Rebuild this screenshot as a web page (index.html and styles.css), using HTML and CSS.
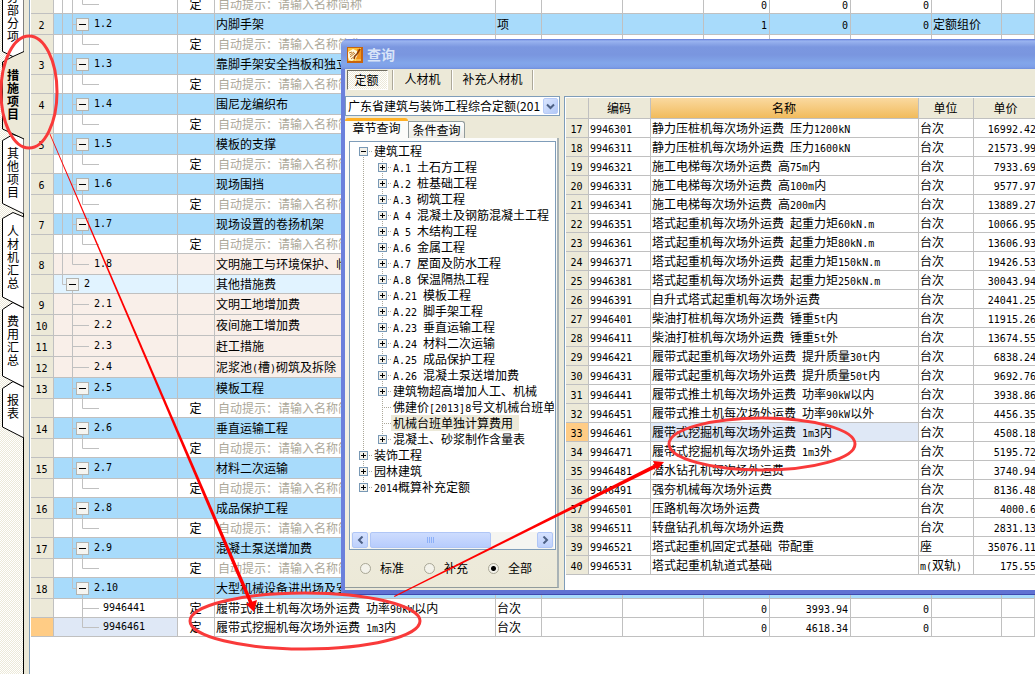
FILE: index.html
```html
<!DOCTYPE html>
<html lang="zh-CN">
<head>
<meta charset="utf-8">
<title>措施项目 - 查询</title>
<link rel="stylesheet" href="styles.css">
</head>
<body>
<div class="app">
  <nav class="side">
    <svg class="side-shapes" width="24" height="440" aria-hidden="true">
      <g fill="#fff" stroke="#000">
        <path d="M2.5 -5V51.500L24 62V-5Z"/>
        <path d="M2.500 388.500V427L24 438V387L13 381.500Z"/>
        <path d="M2.500 309.500V376L24 387V308L13 302.500Z"/>
        <path d="M2.500 218.500V297L24 308V217L13 212.500Z"/>
        <path d="M2.500 140.500V203.500L24 214V138L13 134.500Z"/>
      </g>
      <path d="M24 51.500L13 56.500L2.500 62V129L24 139Z" fill="#ece9d8"/>
      <path d="M24 51.500L13 56.500L2.500 62V129L24 139" fill="none" stroke="#000"/>
    </svg>
    <button class="side-tab t1"><span>分部分项</span></button>
    <button class="side-tab t2 active"><span>措施项目</span></button>
    <button class="side-tab t3"><span>其他项目</span></button>
    <button class="side-tab t4"><span>人材机汇总</span></button>
    <button class="side-tab t5"><span>费用汇总</span></button>
    <button class="side-tab t6"><span>报表</span></button>
  </nav>
  <div class="gutter"></div>
  <main class="sheet">
    <table class="grid main-grid">
      <colgroup><col class="m0"><col class="m1"><col class="m2"><col class="m3"><col class="m4"><col class="m5"><col class="m5"><col class="m6"><col class="m5"><col class="m5"><col class="m7"><col></colgroup>
      <tbody id="items"></tbody>
    </table>
  </main>
</div>

<section class="dialog" aria-label="查询">
  <header class="title">
    <svg width="16" height="16" viewBox="0 0 16 16" aria-hidden="true">
      <rect width="16" height="16" fill="#c8640c"/>
      <rect x="1" y="1" width="13" height="13" fill="#ffc23a"/>
      <path d="M10 2h4v12h-5z" fill="#f0921c"/>
      <path d="M1 5l5-3 4 2 1 3-2 4-4 3-3-1-1-3z" fill="#fff8dc"/>
      <path d="M2 6l3-1M3 8l4-3M3 10l5-4M4 12l5-4" stroke="#c07a2c" fill="none"/>
      <path d="M13 2l-3 5-2 2-1 3" stroke="#8a3a04" stroke-width="1.500" fill="none"/>
      <path d="M8 13h6" stroke="#ffe480"/>
    </svg>
    <h1>查询</h1>
  </header>
  <div class="toolbar">
    <button class="tool pressed">定额</button><i></i>
    <button class="tool">人材机</button><i></i>
    <button class="tool wide">补充人材机</button><i></i>
  </div>
  <div class="body">
    <div class="left">
      <div class="combo">
        <select aria-label="定额库"><option>广东省建筑与装饰工程综合定额(201</option></select>
        <span class="drop"><svg width="9" height="7"><path d="M1 1.500L4.500 5L8 1.500" fill="none" stroke="#4d6185" stroke-width="2"/></svg></span>
      </div>
      <div class="tabs">
        <button class="tab on">章节查询</button>
        <button class="tab">条件查询</button>
      </div>
      <div class="page">
        <div class="treebox">
          <div class="tree" id="tree"></div>
          <div class="scroll">
            <button class="sb" aria-label="向左"><svg width="7" height="8"><path d="M5.500 0.500L2 4L5.500 7.500" fill="none" stroke="#4d6185" stroke-width="2"/></svg></button>
            <div class="thumb"><svg width="9" height="6"><path d="M1.500 0v6M3.500 0v6M5.500 0v6M7.500 0v6" stroke="#8cb0f8"/></svg></div>
            <button class="sb" aria-label="向右"><svg width="7" height="8"><path d="M1.500 0.500L5 4L1.500 7.500" fill="none" stroke="#4d6185" stroke-width="2"/></svg></button>
          </div>
        </div>
        <div class="radios">
          <label><input type="radio" name="kind">标准</label>
          <label><input type="radio" name="kind">补充</label>
          <label><input type="radio" name="kind" checked>全部</label>
        </div>
      </div>
    </div>
    <div class="right">
      <table class="grid query-grid">
        <colgroup><col class="q0"><col class="q1"><col><col class="q3"><col class="q4"></colgroup>
        <thead><tr><th></th><th>编码</th><th class="sorted">名称</th><th>单位</th><th>单价</th></tr></thead>
        <tbody id="quota"></tbody>
      </table>
    </div>
  </div>
</section>

<svg class="marks" aria-hidden="true">
  <g fill="none" stroke="#f93a3a" stroke-width="3">
    <ellipse cx="29" cy="92" rx="28" ry="56"/>
    <ellipse cx="305" cy="621" rx="115" ry="28"/>
    <ellipse cx="762" cy="444" rx="93" ry="26"/>
  </g>
  <g fill="#f00">
    <path d="M49.500 134L50.200 133.700L252.500 602L249.500 604Z"/>
    <path d="M246 604L257 600L254 612Z"/>
    <path d="M394 596L394.500 597L657 467.500L655.500 464Z"/>
    <path d="M653 461L664 462L657 470Z"/>
  </g>
</svg>
<script src="app.js"></script>
</body>
</html>
```

FILE: styles.css
```css
* { box-sizing: border-box; }
html, body { height: 100%; }
body {
  margin: 0;
  overflow: hidden;
  background: #fff;
  color: #000;
  font: 12px/16px "Noto Sans CJK SC", sans-serif;
}
button, select, input { font: inherit; color: inherit; margin: 0; padding: 0; border: 0; background: none; }
svg { display: block; }
.l { font-family: "DejaVu Sans Mono", monospace; font-size: 10px; line-height: 10px; }

.app { display: flex; height: 100%; }

.side {
  position: relative;
  flex: none;
  width: 24px;
  border-right: 1px solid #000;
  background: repeating-conic-gradient(#ece9d8 0 25%, #fff 0 50%) 0 0 / 2px 2px;
  display: flex;
  flex-direction: column;
}
.side-shapes { position: absolute; left: 0; top: 0; }
.side-tab {
  position: relative;
  width: 24px;
  display: flex;
  align-items: center;
  padding-left: 7px;
}
.side-tab span { width: 12px; line-height: 13px; word-break: break-all; }
.side-tab.active { font-weight: bold; }
.t1 { height: 56px; align-items: flex-end; padding-bottom: 14px; overflow: hidden; }
.t2 { height: 78px; padding-bottom: 3px; }
.t3 { height: 78px; padding-bottom: 3px; }
.t4 { height: 91px; padding-bottom: 3px; }
.t5 { height: 79px; padding-bottom: 6px; }
.t6 { height: 48px; }

.gutter { flex: none; width: 6px; background: #ece9d8; border-right: 1px solid #7f9db9; }
.sheet { flex: 1; min-width: 0; overflow: hidden; padding-left: 1px; }

.grid { table-layout: fixed; width: 100%; border-collapse: separate; border-spacing: 0; }
.grid td, .grid th {
  padding: 0 2px 0 1px;
  border: solid #c0c0c0;
  border-width: 0 1px 1px 0;
  white-space: pre;
  overflow: hidden;
  line-height: 16px;
  font-weight: normal;
  text-align: left;
  vertical-align: middle;
}
.grid td.num { background: #ece9d8; text-align: center; }
.grid td.num.cur { background: #ffcc85; }
.grid td.c { text-align: center; }
.grid td.r { text-align: right; padding-right: 2px; }

.main-grid { margin-top: -5px; }
.main-grid tr { height: 19px; }
.main-grid tr.item, .main-grid tr.plain { height: 21px; }
.m0 { width: 23px; }
.m1 { width: 124px; }
.m2 { width: 37px; }
.m3 { width: 281px; }
.m4 { width: 46px; }
.m5 { width: 81px; }
.m6 { width: 66px; }
.m7 { width: 70px; }
.item { background: #a8dbfb; }
.plain { background: #f9efe9; }
.group { background: #e1f3ff; }
.grid td.node { padding: 0; }
.node div { display: flex; align-items: center; }
.node.sel { background: #dfe8f6; }
.hint td.name { color: #aca899; padding-left: 3px; }

.dialog {
  position: absolute;
  left: 341px;
  top: 39px;
  right: -4px;
  background: #ece9d8;
  border: solid #6b80dc;
  border-width: 0 0 4px 4px;
  border-bottom-color: #6072d2;
  border-radius: 7px 0 0 0;
  box-shadow: inset 1px 0 0 #dfe3f3, 0 1px 0 #3e49b0;
}
.title {
  height: 30px;
  margin-left: -4px;
  padding: 2px 0 0 6px;
  display: flex;
  align-items: center;
  gap: 4px;
  border-radius: 7px 0 0 0;
  background: linear-gradient(#5f7ad8 0, #9ab4f0 2px, #7b97e0 8px, #7a96df 16px, #82a6ea 24px, #7e9fe8 28px, #7090dc);
}
.title h1 { margin: 0; padding-bottom: 3px; font-size: 14px; line-height: 18px; color: #d8e4f8; }
.toolbar { height: 27px; padding: 1px 0 0 2px; display: flex; align-items: flex-start; }
.tool { height: 20px; width: 57px; line-height: 16px; padding-bottom: 2px; }
.tool.wide { width: 79px; }
.tool.pressed {
  width: 41px;
  margin-right: 4px;
  padding-right: 2px;
  border: 1px solid #716f64;
  border-color: #716f64 #fff #fff #716f64;
  background: repeating-conic-gradient(#ece9d8 0 25%, #fff 0 50%) 0 0 / 2px 2px;
  line-height: 18px;
  padding-bottom: 0;
}
.toolbar i { width: 2px; height: 20px; background: #aca899; border-right: 1px solid #fff; }

.body { display: flex; gap: 4px; height: 494px; }
.left { flex: none; width: 215px; display: flex; flex-direction: column; }
.combo { height: 20px; border: 1px solid #7f9db9; background: #fff; display: flex; align-items: center; padding: 0 1px 0 2px; }
.combo select { flex: 1; min-width: 0; height: 18px; appearance: none; outline: 0; text-overflow: clip; }
.drop {
  flex: none;
  width: 15px; height: 16px;
  display: flex; align-items: center; justify-content: center;
  border-radius: 2px;
  background: linear-gradient(135deg, #dbe6fe, #b2c8f7);
  border: 1px solid #b7cbf8;
}
.tabs { display: flex; align-items: flex-end; padding-top: 2px; height: 22px; }
.tab { height: 17px; width: 57px; border: 1px solid #919b9c; border-bottom: 0; border-radius: 0 3px 0 0; background: linear-gradient(#fff, #ecebe6); box-shadow: 0 1px 0 #919b9c; }
.tab.on {
  height: 20px; width: 63px;
  border: 0; border-top: 3px solid #ffb024;
  border-radius: 3px 3px 0 0;
  background: #fcfcfa;
  line-height: 14px;
  padding-bottom: 3px;
  box-shadow: none;
}
.page {
  flex: 1;
  min-height: 0;
  width: 214px;
  margin-bottom: 2px;
  display: flex;
  flex-direction: column;
  background: linear-gradient(#fcfcfa, #ece9d8);
  box-shadow: inset 0 1px 0 #fcfcfa;
  border-right: 2px solid #a9b3b6;
  border-bottom: 1px solid #919b9c;
  padding: 3px 1px 0 4px;
}
.treebox { height: 409px; flex: none; border: 1px solid #7f9db9; background: #fff; display: flex; flex-direction: column; padding: 1px 1px 0 1px; overflow: hidden; }
.tree { flex: 1; min-height: 0; overflow: hidden; }
.trow { display: flex; height: 16px; white-space: pre; }
.trow svg { flex: none; }
.trow b { font-weight: normal; line-height: 16px; }
.trow b.sel { background: #ece9d8; padding: 0 6px 0 2px; margin-left: -2px; }
.scroll { display: flex; height: 17px; gap: 2px; background: #f5f5f1; padding: 0 1px; }
.sb, .thumb { display: flex; align-items: center; justify-content: center; border: 1px solid #b0c6f6; border-radius: 2px; background: linear-gradient(#d6e2ff, #bdd0fb); height: 16px; }
.sb { width: 16px; }
.thumb { width: 121px; margin-right: auto; background: linear-gradient(#cddcfe, #b7ccfc); }
.radios { display: flex; gap: 14px; padding: 10px 0 0 11px; }
.radios label { display: flex; align-items: center; width: 50px; height: 16px; }
.radios input {
  appearance: none;
  width: 11px; height: 11px;
  margin-right: 9px;
  border: 1px solid #a9a796;
  border-radius: 50%;
  background: #f3f2ea;
}
.radios input:checked { background: radial-gradient(circle, #000 0 2px, #f3f2ea 3px); }

.right { flex: 1; min-width: 0; border: 1px solid #7f9db9; border-width: 1px 0 0 1px; background: #fff; padding: 1px 0 0 1px; overflow: hidden; }
.query-grid tr { height: 19px; }
.query-grid thead tr { height: 21px; }
.grid th { background: #ece9d8; text-align: center; }
.grid th.sorted { background: linear-gradient(#fad9a0, #f1bb5c); }
.q0 { width: 23px; }
.q1 { width: 62px; }
.q3 { width: 55px; }
.q4 { width: 65px; }
.grid td.picked { background: #dfe8f6; }

.marks { position: absolute; left: 0; top: 0; width: 100%; height: 100%; pointer-events: none; }
```

FILE: app.js
```javascript
// Half-width runs get the monospace face so that two of them fill one full-width cell.
function mix(s) {
  return s.replace(/[\x20-\x7e]+/g, function (t) { return '<span class="l">' + t + '</span>'; });
}

// [kind, number, code, name, unit, extra cells]
var HINT = ['hint'];
var items = [
  ['hint', '', '', '', '', ['', '', '0', '0', '0', '']],
  ['item', '2', '1.2', '内脚手架', '项', ['', '', '1', '0', '0', '定额组价']], HINT,
  ['item', '3', '1.3', '靠脚手架安全挡板和独立斜道'], HINT,
  ['item', '4', '1.4', '围尼龙编织布'], HINT,
  ['item', '5', '1.5', '模板的支撑'], HINT,
  ['item', '6', '1.6', '现场围挡'], HINT,
  ['item', '7', '1.7', '现场设置的卷扬机架'], HINT,
  ['plain', '8', '1.8', '文明施工与环境保护、临时设施'],
  ['group', '', '2', '其他措施费'],
  ['plain', '9', '2.1', '文明工地增加费'],
  ['plain', '10', '2.2', '夜间施工增加费'],
  ['plain', '11', '2.3', '赶工措施'],
  ['plain', '12', '2.4', '泥浆池(槽)砌筑及拆除'],
  ['item', '13', '2.5', '模板工程'], HINT,
  ['item', '14', '2.6', '垂直运输工程'], HINT,
  ['item', '15', '2.7', '材料二次运输'], HINT,
  ['item', '16', '2.8', '成品保护工程'], HINT,
  ['item', '17', '2.9', '混凝土泵送增加费'], HINT,
  ['item', '18', '2.10', '大型机械设备进出场及安拆'],
  ['leaf', '', '9946441', '履带式推土机每次场外运费 功率90kW以内', '台次', ['', '', '0', '3993.94', '0', '']],
  ['leaf last', '', '9946461', '履带式挖掘机每次场外运费 1m3内', '台次', ['', '', '0', '4618.34', '0', '']]
];

var second = false;
document.getElementById('items').innerHTML = items.map(function (r) {
  var kind = r[0], code = r[2] || '', h = (kind === 'item' || kind === 'plain') ? 20 : 18;
  var mid = h / 2 + 0.5, d = '', box = null, w = 40;
  if (kind === 'group') { second = true; d += 'M8.5 0V' + mid + 'H12M18.5 ' + mid + 'V' + h; box = 12; w = 30; }
  else if (!second) d += 'M8.5 0V' + h;
  if (kind === 'item') {
    d += 'M18.5 0V' + (code === '2.10' ? mid : h) + 'M18.5 ' + mid + 'H22M28.5 ' + mid + 'V' + h;
    box = 22;
  }
  if (kind === 'hint') d += 'M18.5 0V' + h + 'M28.5 0V' + mid + 'H45';
  if (kind === 'plain') d += 'M18.5 0V' + (code === '1.8' ? mid : h) + 'M18.5 ' + mid + 'H35';
  if (kind.indexOf('leaf') === 0) { d += 'M28.5 0V' + (kind === 'leaf' ? h : mid) + 'M28.5 ' + mid + 'H45'; w = 49; }
  if (kind === 'hint') w = 49;
  var svg = '<svg width="' + w + '" height="' + h + '"><path d="' + d + '" fill="none" stroke="#c0c0c0"/>';
  if (box !== null) {
    var y = mid - 6;
    svg += '<rect x="' + (box + 0.5) + '" y="' + y + '" width="12" height="12" fill="#f6f5f1" stroke="#b4b4b0"/>' +
      '<path d="M' + (box + 3) + ' ' + mid + 'h7" stroke="#000"/>';
  }
  svg += '</svg>';
  var det = kind === 'hint' || kind.indexOf('leaf') === 0;
  var name = kind === 'hint' ? '自动提示：请输入名称简称' : r[3];
  var last = kind === 'leaf last';
  var extra = r[5] || ['', '', '', '', '', ''];
  return '<tr class="' + kind + '"><td class="num' + (last ? ' cur' : '') + '">' + mix(r[1] || '') + '</td>' +
    '<td class="node' + (last ? ' sel' : '') + '"><div>' + svg + mix(code) + '</div></td>' +
    '<td class="c">' + (det ? '定' : '') + '</td><td class="name">' + mix(name) + '</td><td>' + (r[4] || '') + '</td>' +
    extra.map(function (v, i) { return '<td' + (i < 5 ? ' class="r"' : '') + '>' + mix(v) + '</td>'; }).join('') +
    '<td></td></tr>';
}).join('');

// [code, name, price, unit]
var quota = [
  ['9946301', '静力压桩机每次场外运费 压力1200kN', '16992.42'],
  ['9946311', '静力压桩机每次场外运费 压力1600kN', '21573.99'],
  ['9946321', '施工电梯每次场外运费 高75m内', '7933.69'],
  ['9946331', '施工电梯每次场外运费 高100m内', '9577.97'],
  ['9946341', '施工电梯每次场外运费 高200m内', '13889.27'],
  ['9946351', '塔式起重机每次场外运费 起重力矩60kN.m', '10066.95'],
  ['9946361', '塔式起重机每次场外运费 起重力矩80kN.m', '13606.93'],
  ['9946371', '塔式起重机每次场外运费 起重力矩150kN.m', '19426.53'],
  ['9946381', '塔式起重机每次场外运费 起重力矩250kN.m', '30043.94'],
  ['9946391', '自升式塔式起重机每次场外运费', '24041.25'],
  ['9946401', '柴油打桩机每次场外运费 锤重5t内', '11915.26'],
  ['9946411', '柴油打桩机每次场外运费 锤重5t外', '13674.55'],
  ['9946421', '履带式起重机每次场外运费 提升质量30t内', '6838.24'],
  ['9946431', '履带式起重机每次场外运费 提升质量50t内', '9692.76'],
  ['9946441', '履带式推土机每次场外运费 功率90kW以内', '3938.86'],
  ['9946451', '履带式推土机每次场外运费 功率90kW以外', '4456.35'],
  ['9946461', '履带式挖掘机每次场外运费 1m3内', '4508.18'],
  ['9946471', '履带式挖掘机每次场外运费 1m3外', '5195.72'],
  ['9946481', '潜水钻孔机每次场外运费', '3740.94'],
  ['9946491', '强夯机械每次场外运费', '8136.48'],
  ['9946501', '压路机每次场外运费', '4000.6'],
  ['9946511', '转盘钻孔机每次场外运费', '2831.13'],
  ['9946521', '塔式起重机固定式基础 带配重', '35076.11', '座'],
  ['9946531', '塔式起重机轨道式基础', '175.55', 'm(双轨)']
];
document.getElementById('quota').innerHTML = quota.map(function (q, i) {
  var n = i + 17, cur = n === 33;
  return '<tr><td class="num' + (cur ? ' cur' : '') + '">' + mix(String(n)) + '</td><td>' + mix(q[0]) + '</td>' +
    '<td' + (cur ? ' class="picked"' : '') + '>' + mix(q[1]) + '</td><td>' + mix(q[3] || '台次') + '</td>' +
    '<td class="r">' + mix(q[2]) + '</td></tr>';
}).join('');

// [level, sign, label]
var tree = [
  [0, '-', '建筑工程'], [1, '+', 'A.1 土石方工程'], [1, '+', 'A.2 桩基础工程'], [1, '+', 'A.3 砌筑工程'],
  [1, '+', 'A 4 混凝土及钢筋混凝土工程'], [1, '+', 'A 5 木结构工程'], [1, '+', 'A.6 金属工程'],
  [1, '+', 'A.7 屋面及防水工程'], [1, '+', 'A.8 保温隔热工程'], [1, '+', 'A.21 模板工程'],
  [1, '+', 'A.22 脚手架工程'], [1, '+', 'A.23 垂直运输工程'], [1, '+', 'A.24 材料二次运输'],
  [1, '+', 'A.25 成品保护工程'], [1, '+', 'A.26 混凝土泵送增加费'], [1, '+', '建筑物超高增加人工、机械'],
  [1, '', '佛建价[2013]8号文机械台班单价'], [1, '', '机械台班单独计算费用'], [1, '+', '混凝土、砂浆制作含量表'],
  [0, '+', '装饰工程'], [0, '+', '园林建筑'], [0, '+', '2014概算补充定额']
];
document.getElementById('tree').innerHTML = tree.map(function (t, i) {
  var x = t[0] ? 31 : 12, w = t[0] ? 42 : 23, lastRow = i === tree.length - 1;
  var d = 'M12.5 ' + (i ? 0 : 8) + 'V' + (lastRow ? 8 : 16);
  if (t[0]) d += 'M31.5 0V' + (i === 18 ? 8 : 16);
  d += 'M' + x + ' 8.5H' + (w - 2);
  var s = '<svg width="' + w + '" height="16"><path d="' + d + '" fill="none" stroke="#aca899" stroke-dasharray="1 1"/>';
  if (t[1]) {
    s += '<rect x="' + (x - 3.5) + '" y="4.5" width="8" height="8" fill="#f3f1ea" stroke="#7898b5"/>' +
      '<path d="M' + (x - 2) + ' 8.5h5' + (t[1] === '+' ? 'M' + (x + 0.5) + ' 6v5' : '') + '" stroke="#000"/>';
  }
  return '<div class="trow">' + s + '</svg><b' + (i === 17 ? ' class="sel"' : '') + '>' + mix(t[2]) + '</b></div>';
}).join('');
```
